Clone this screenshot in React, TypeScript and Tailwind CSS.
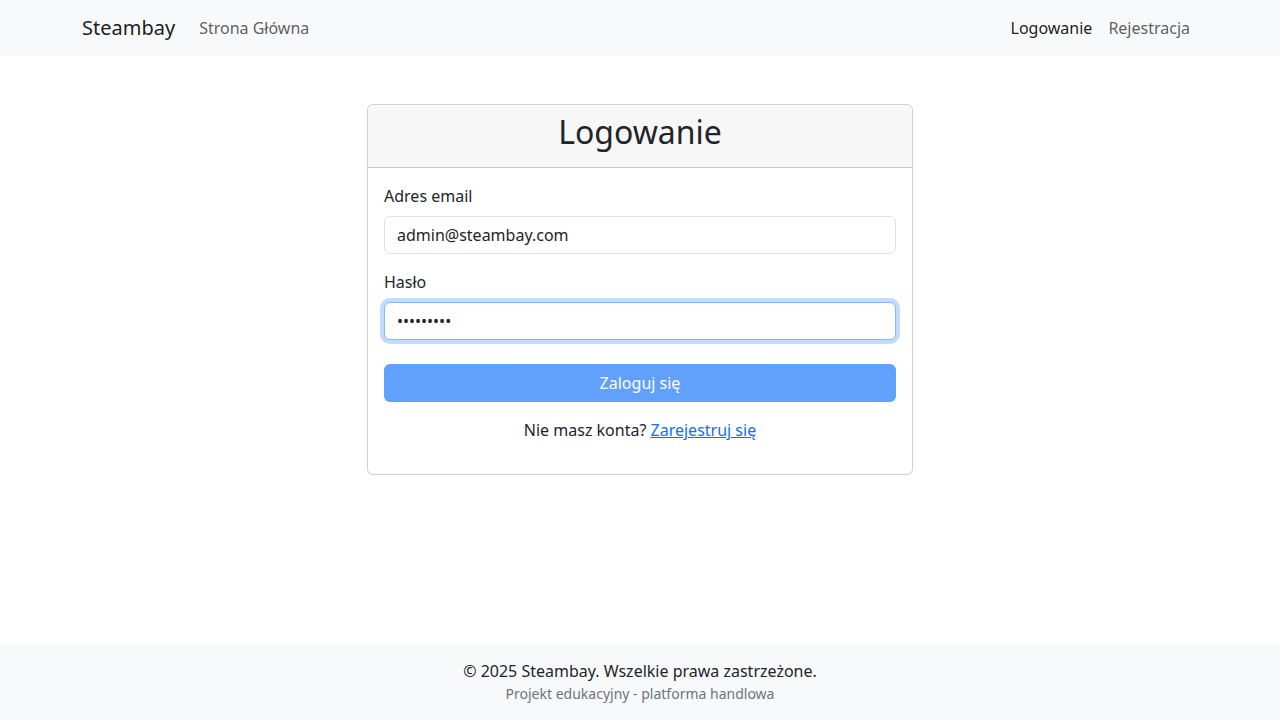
import React from "react";

const font = { fontFamily: '"Noto Sans", "Liberation Sans", sans-serif' };

const Navbar = () => {
  return (
    <nav className="bg-[#f8f9fa] h-14">
      <div className="max-w-[1140px] mx-auto px-3 h-full flex items-center justify-between">
        <div className="flex items-center">
          <a href="#" className="text-[20px] leading-[30px] py-[5px] mr-4 text-black/90 no-underline">
            Steambay
          </a>
          <a href="#" className="px-2 py-2 text-base text-black/65">
            Strona Główna
          </a>
        </div>
        <div className="flex items-center">
          <a href="#" className="px-2 py-2 text-base text-black/90">
            Logowanie
          </a>
          <a href="#" className="px-2 py-2 text-base text-black/65">
            Rejestracja
          </a>
        </div>
      </div>
    </nav>
  );
};

const LoginCard = () => {
  return (
    <div className="w-[546px] mx-auto border border-black/[0.175] rounded-md bg-white">
      <div className="bg-[#f7f7f7] border-b border-black/[0.175] rounded-t-md px-4 py-2 text-center">
        <h2 className="text-[32px] leading-[38.4px] font-normal mb-2 text-[#212529]">Logowanie</h2>
      </div>
      <div className="p-4">
        <div className="mb-4">
          <label className="block mb-2 text-base text-[#212529]">Adres email</label>
          <input
            type="email"
            readOnly
            defaultValue="admin@steambay.com"
            className="w-full h-[38px] px-3 py-1.5 text-base text-[#212529] bg-white border border-[#dee2e6] rounded-md outline-none"
          />
        </div>
        <div className="mb-4">
          <label className="block mb-2 text-base text-[#212529]">Hasło</label>
          <input
            type="password"
            readOnly
            defaultValue="123456789"
            className="w-full h-[38px] px-3 py-1.5 text-base text-[#212529] bg-white border border-[#86b7fe] rounded-md outline-none shadow-[0_0_0_4px_rgba(13,110,253,0.25)]"
          />
        </div>
        <button
          disabled
          className="w-full h-[38px] mt-2 rounded-md bg-[#0d6efd] opacity-65 text-white text-base"
        >
          Zaloguj się
        </button>
        <p className="mt-4 mb-4 text-center text-base leading-6 text-[#212529]">
          Nie masz konta?{" "}
          <a href="#" className="text-[#0d6efd] underline">
            Zarejestruj się
          </a>
        </p>
      </div>
    </div>
  );
};

const Footer = () => {
  return (
    <footer className="bg-[#f8f9fa] py-4 text-center mt-auto">
      <p className="text-base leading-6 text-[#212529]">© 2025 Steambay. Wszelkie prawa zastrzeżone.</p>
      <p className="text-sm leading-[21px] text-[#6c757d]">Projekt edukacyjny - platforma handlowa</p>
    </footer>
  );
};

export default function App() {
  return (
    <div className="min-h-screen flex flex-col bg-white text-[#212529]" style={font}>
      <Navbar />
      <main className="pt-12 pb-12">
        <LoginCard />
      </main>
      <Footer />
    </div>
  );
}
